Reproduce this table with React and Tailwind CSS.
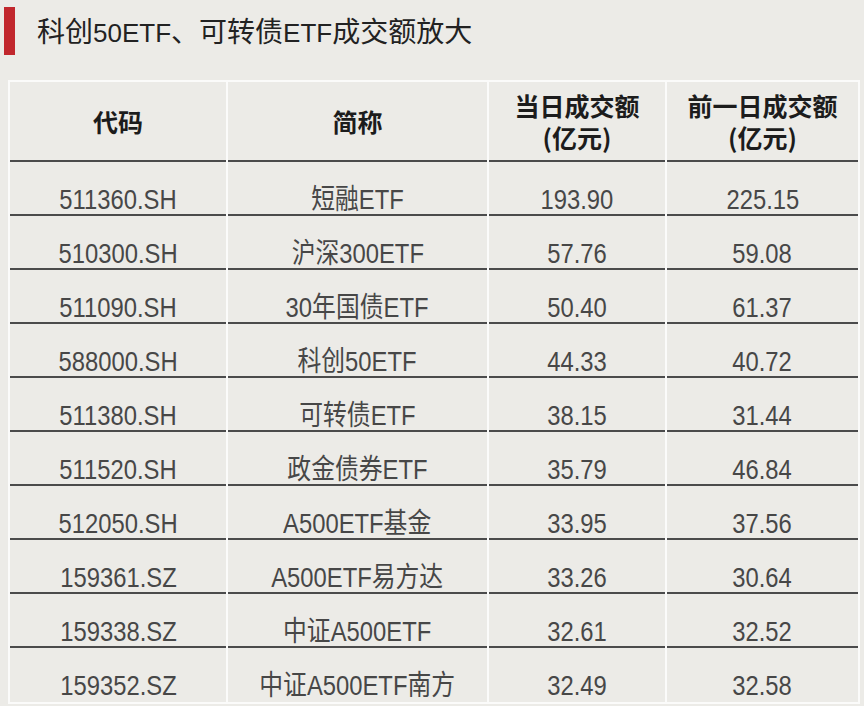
import React from "react";

const rows = [
  ["511360.SH", "短融ETF", "193.90", "225.15"],
  ["510300.SH", "沪深300ETF", "57.76", "59.08"],
  ["511090.SH", "30年国债ETF", "50.40", "61.37"],
  ["588000.SH", "科创50ETF", "44.33", "40.72"],
  ["511380.SH", "可转债ETF", "38.15", "31.44"],
  ["511520.SH", "政金债券ETF", "35.79", "46.84"],
  ["512050.SH", "A500ETF基金", "33.95", "37.56"],
  ["159361.SZ", "A500ETF易方达", "33.26", "30.64"],
  ["159338.SZ", "中证A500ETF", "32.61", "32.52"],
  ["159352.SZ", "中证A500ETF南方", "32.49", "32.58"],
];

function Mixed({ text, cjkClass }) {
  const parts = text.match(/[\u3000-\u9fff\uff00-\uffef]+|[^\u3000-\u9fff\uff00-\uffef]+/g) || [];
  return (
    <>
      {parts.map((p, i) =>
        /[\u3000-\u9fff\uff00-\uffef]/.test(p) ? (
          <span key={i} className={cjkClass}>
            {p}
          </span>
        ) : (
          <span key={i}>{p}</span>
        )
      )}
    </>
  );
}

const latin = "font-['Liberation_Sans',sans-serif]";
const cjkBody = "font-['Noto_Sans_CJK_SC',sans-serif] text-[28px]";

function HeaderCell({ children }) {
  return (
    <div className="h-[80px] border-b-2 border-[#4b4b4b] bg-[#ecebe7] flex flex-col items-center justify-center font-['Noto_Sans_CJK_SC',sans-serif] font-bold text-[25px] leading-[32px] text-[#1c1c1c] text-center">
      <div>{children}</div>
    </div>
  );
}

export default function App() {
  return (
    <div className="w-[864px] h-[706px] bg-[#ecebe7] overflow-hidden">
      <div className="flex items-center pt-[7px] pl-[4px]">
        <div className="w-[11px] h-[48px] bg-[#c1272d]" />
        <div className={`ml-[22px] text-[26px] leading-[32px] text-[#222] ${latin}`}>
          <Mixed text="科创50ETF、可转债ETF成交额放大" cjkClass="font-['Noto_Sans_CJK_SC',sans-serif] text-[28px]" />
        </div>
      </div>
      <div className="mt-[25px] ml-[8px] w-[852px] bg-[#fbfbfa] p-[2px] grid grid-cols-[216px_259px_176px_191px] gap-x-[2px]">
        <HeaderCell>代码</HeaderCell>
        <HeaderCell>简称</HeaderCell>
        <HeaderCell>
          当日成交额
          <br />
          (亿元)
        </HeaderCell>
        <HeaderCell>
          前一日成交额
          <br />
          (亿元)
        </HeaderCell>
        {rows.map((r, ri) =>
          r.map((c, ci) => (
            <div
              key={`${ri}-${ci}`}
              className={`h-[54px] bg-[#ecebe7] flex items-end justify-center text-[28px] leading-[28px] text-[#474747] ${latin} ${
                ri < rows.length - 1 ? "border-b-2 border-[#4b4b4b]" : "pb-[2px]"
              }`}
            >
              <div className="whitespace-nowrap scale-x-[0.85]">
                <Mixed text={c} cjkClass={cjkBody} />
              </div>
            </div>
          ))
        )}
      </div>
    </div>
  );
}
